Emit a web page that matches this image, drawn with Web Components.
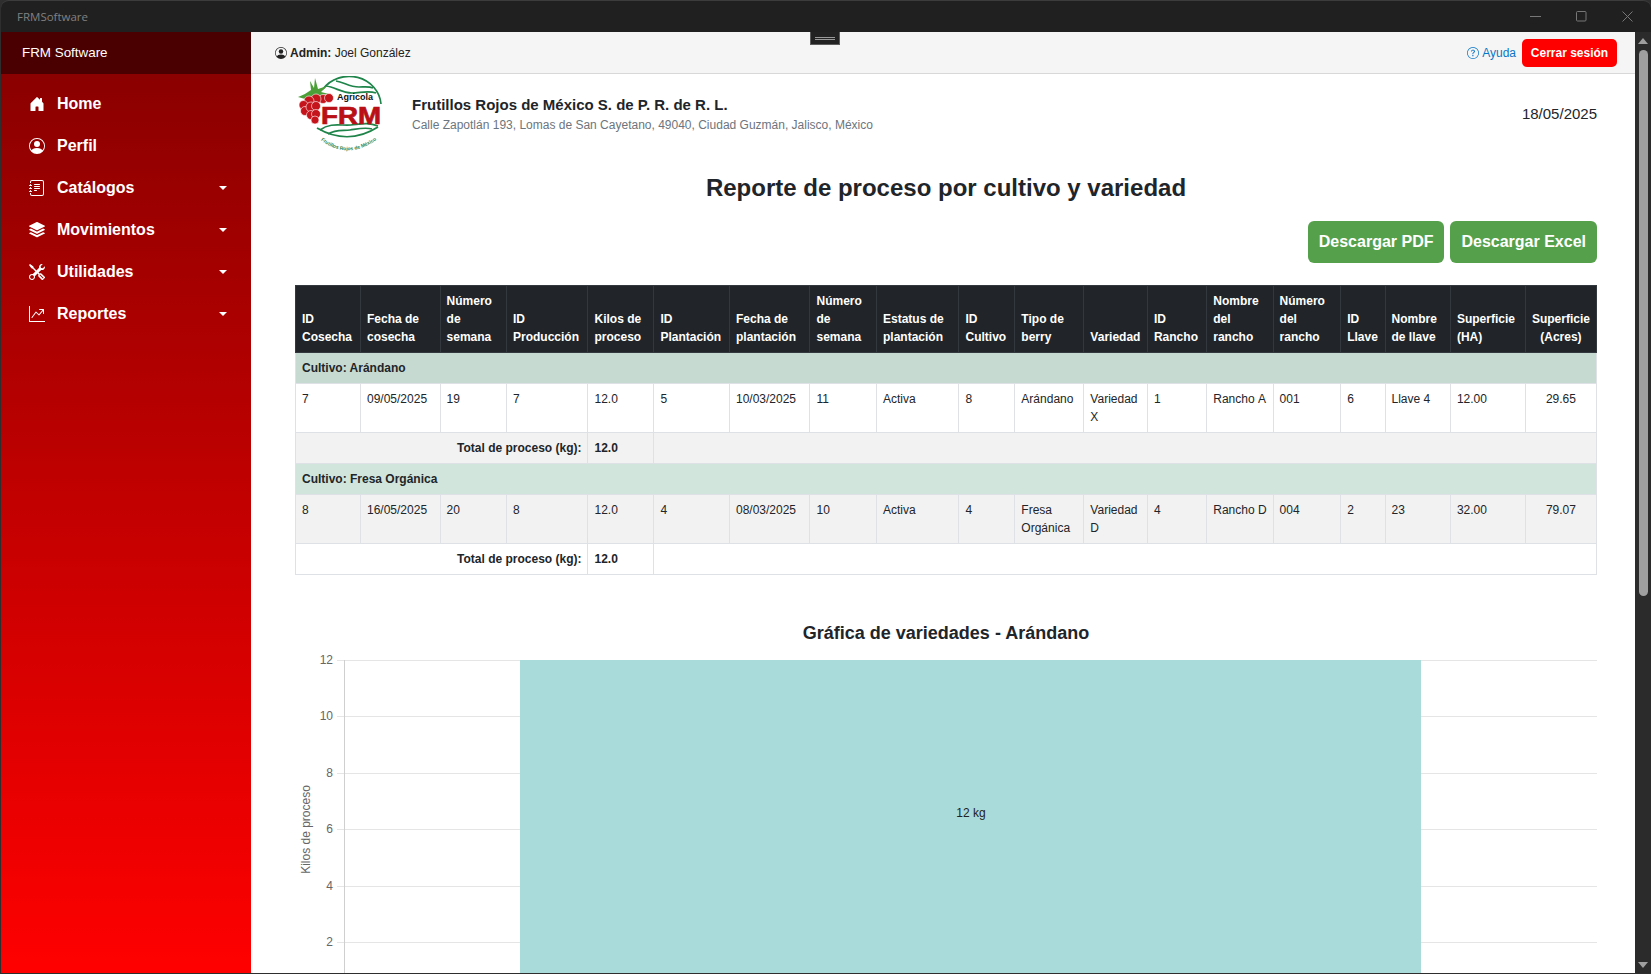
<!DOCTYPE html>
<html lang="es">
<head>
<meta charset="utf-8">
<title>FRMSoftware</title>
<style>
  html, body { margin: 0; height: 100%; overflow: hidden; background: #1c1c1c; }
  body { font-family: "Liberation Sans", Arial, sans-serif; }
</style>
</head>
<body>
<frm-window>
  <frm-sidebar slot="side"></frm-sidebar>
  <frm-topbar slot="top"></frm-topbar>
  <frm-company></frm-company>
  <frm-report-title></frm-report-title>
  <frm-report-table></frm-report-table>
  <frm-chart></frm-chart>
</frm-window>

<script>
class frmWindow extends HTMLElement {
  constructor() {
    super();
    this.attachShadow({ mode: 'open' });
  }
  connectedCallback() {
    this.shadowRoot.innerHTML = `
    <style>
    :host{
      display: flex;
      flex-direction: column;
      height: 974px;
      box-sizing: border-box;
      padding: 0 0 1px 1px;
      background: #2e2e2e;
      overflow: hidden;
      font-family: "Liberation Sans", Arial, sans-serif;
    }
    .title{
      flex: 0 0 32px;
      box-sizing: border-box;
      display: flex;
      align-items: center;
      background: #202020;
      border-top: 1px solid #3c3c3c;
      color: #808080;
      font: 11.5px "Open Sans", sans-serif;
      padding: 0 1px 0 16px;
      border-radius: 8px 8px 0 0;
    }
    .title span{ flex: 1; }
    .ctl{ width: 46px; height: 31px; display: flex; align-items: center; justify-content: center; }
    .ctl svg{ stroke: #777; fill: none; }
    .app{ flex: 1; display: flex; min-height: 0; }
    .main{ flex: 1; display: flex; flex-direction: column; min-width: 0; background: #fff; position: relative; }
    .grip{
      position: absolute; left: 559px; top: 0;
      width: 30px; height: 13px;
      box-sizing: border-box;
      background: #222;
      border: 1px solid #5c5c5c;
      border-top: 0;
      display: flex; flex-direction: column; justify-content: center; align-items: center; gap: 1px;
    }
    .grip i{ display: block; width: 20px; height: 1px; background: #999; }
    .body{ flex: 1; min-height: 0; overflow: hidden; padding: 2px 38px 0 44px; }
    .bar{ flex: 0 0 16px; background: #2b2b2b; display: flex; flex-direction: column; align-items: center; }
    .arrow{ width: 0; height: 0; border-left: 5px solid transparent; border-right: 5px solid transparent; }
    .up{ border-bottom: 6px solid #9f9f9f; margin-top: 6px; }
    .down{ border-top: 6px solid #9f9f9f; margin-top: auto; margin-bottom: 5px; }
    .thumb{ width: 9px; height: 546px; margin-top: 6px; background: #9f9f9f; border-radius: 5px; }
    </style>
    <div class="title">
      <span>FRMSoftware</span>
      <div class="ctl"><svg width="11" height="11"><path d="M0 5.500h11"/></svg></div>
      <div class="ctl"><svg width="11" height="11"><rect x=".5" y=".5" width="9.500" height="9.500" rx="1"/></svg></div>
      <div class="ctl"><svg width="11" height="11"><path d="M.5.5l10 10M10.500.5l-10 10"/></svg></div>
    </div>
    <div class="app">
      <slot name="side"></slot>
      <div class="main">
        <slot name="top"></slot>
        <div class="grip"><i></i><i></i></div>
        <div class="body"><slot></slot></div>
      </div>
      <div class="bar">
        <div class="arrow up"></div>
        <div class="thumb"></div>
        <div class="arrow down"></div>
      </div>
    </div>
    `;
  }
}

class frmSidebar extends HTMLElement {
  constructor() {
    super();
    this.attachShadow({ mode: 'open' });
  }
  getItems() {
    return [
      ['Home', false, '<path d="M6.5 14.500v-3.505c0-.245.25-.495.5-.495h2c.25 0 .5.25.5.5v3.500a.5.5 0 0 0 .5.5h4a.5.5 0 0 0 .5-.5v-7a.5.5 0 0 0-.146-.354L13 5.793V2.500a.5.5 0 0 0-.5-.5h-1a.5.5 0 0 0-.5.5v1.293L8.354 1.146a.5.5 0 0 0-.708 0l-6 6A.5.5 0 0 0 1.500 7.500v7a.5.5 0 0 0 .5.5h4a.5.5 0 0 0 .5-.5z"/>'],
      ['Perfil', false, '<path d="M11 6a3 3 0 1 1-6 0 3 3 0 0 1 6 0z"/><path fill-rule="evenodd" d="M0 8a8 8 0 1 1 16 0A8 8 0 0 1 0 8zm8-7a7 7 0 0 0-5.468 11.370C3.242 11.226 4.805 10 8 10s4.757 1.225 5.468 2.370A7 7 0 0 0 8 1z"/>'],
      ['Catálogos', true, '<path d="M5 10.500a.5.5 0 0 1 .5-.5h2a.5.5 0 0 1 0 1h-2a.5.5 0 0 1-.5-.5zm0-2a.5.5 0 0 1 .5-.5h5a.5.5 0 0 1 0 1h-5a.5.5 0 0 1-.5-.5zm0-2a.5.5 0 0 1 .5-.5h5a.5.5 0 0 1 0 1h-5a.5.5 0 0 1-.5-.5zm0-2a.5.5 0 0 1 .5-.5h5a.5.5 0 0 1 0 1h-5a.5.5 0 0 1-.5-.5z"/><path d="M3 0h10a2 2 0 0 1 2 2v12a2 2 0 0 1-2 2H3a2 2 0 0 1-2-2v-1h1v1a1 1 0 0 0 1 1h10a1 1 0 0 0 1-1V2a1 1 0 0 0-1-1H3a1 1 0 0 0-1 1v1H1V2a2 2 0 0 1 2-2z"/><path d="M1 5v-.5a.5.5 0 0 1 1 0V5h.5a.5.5 0 0 1 0 1h-2a.5.5 0 0 1 0-1H1zm0 3v-.5a.5.5 0 0 1 1 0V8h.5a.5.5 0 0 1 0 1h-2a.5.5 0 0 1 0-1H1zm0 3v-.5a.5.5 0 0 1 1 0v.5h.5a.5.5 0 0 1 0 1h-2a.5.5 0 0 1 0-1H1z"/>'],
      ['Movimientos', true, '<path d="m14.120 10.163 1.715.858c.22.11.22.424 0 .534L8.267 15.340a.598.598 0 0 1-.534 0L.165 11.555a.299.299 0 0 1 0-.534l1.716-.858 5.317 2.659c.505.252 1.100.252 1.604 0l5.317-2.660zM7.733.063a.598.598 0 0 1 .534 0l7.568 3.784a.3.3 0 0 1 0 .535L8.267 8.165a.598.598 0 0 1-.534 0L.165 4.382a.299.299 0 0 1 0-.535L7.733.063z"/><path d="m14.120 6.576 1.715.858c.22.11.22.424 0 .534l-7.568 3.784a.598.598 0 0 1-.534 0L.165 7.968a.299.299 0 0 1 0-.534l1.716-.858 5.317 2.659c.505.252 1.100.252 1.604 0l5.317-2.659z"/>'],
      ['Utilidades', true, '<path d="M1 0 0 1l2.200 3.081a1 1 0 0 0 .815.419h.07a1 1 0 0 1 .708.293l2.675 2.675-2.617 2.654A3.003 3.003 0 0 0 0 13a3 3 0 1 0 5.878-.851l2.654-2.617.968.968-.305.914a1 1 0 0 0 .242 1.023l3.270 3.270a.997.997 0 0 0 1.414 0l1.586-1.586a.997.997 0 0 0 0-1.414l-3.270-3.270a1 1 0 0 0-1.023-.242L10.500 9.500l-.96-.96 2.680-2.643A3.005 3.005 0 0 0 16 3c0-.269-.035-.53-.102-.777l-2.140 2.141L12 4l-.364-1.757L13.777.102a3 3 0 0 0-3.675 3.680L7.462 6.460 4.793 3.793a1 1 0 0 1-.293-.707v-.071a1 1 0 0 0-.419-.814L1 0Zm9.646 10.646a.5.5 0 0 1 .708 0l2.914 2.915a.5.5 0 0 1-.707.707l-2.915-2.914a.5.5 0 0 1 0-.708ZM3 11l.471.242.529.026.287.445.445.287.026.529L5 13l-.242.471-.026.529-.445.287-.287.445-.529.026L3 15l-.471-.242L2 14.732l-.287-.445L1.268 14l-.026-.529L1 13l.242-.471.026-.529.445-.287.287-.445.529-.026L3 11Z"/>'],
      ['Reportes', true, '<path fill-rule="evenodd" d="M0 0h1v15h15v1H0V0Zm10 3.500a.5.5 0 0 1 .5-.5h4a.5.5 0 0 1 .5.5v4a.5.5 0 0 1-1 0V4.900l-3.613 4.417a.5.5 0 0 1-.74.037L7.060 6.767l-3.656 5.027a.5.5 0 0 1-.808-.588l4-5.500a.5.5 0 0 1 .758-.06l2.609 2.610L13.445 4H10.500a.5.5 0 0 1-.5-.5Z"/>'],
    ];
  }
  getStyles() {
    return `
    <style>
    :host{
      display: flex;
      flex-direction: column;
      flex: 0 0 250px;
      width: 250px;
      color: #fff;
      font-family: "Liberation Sans", Arial, sans-serif;
    }
    .brand{
      flex: 0 0 42px;
      box-sizing: border-box;
      background: #4a0000;
      display: flex;
      align-items: center;
      padding: 0 0 1px 21px;
      font-size: 13.400px;
    }
    nav{
      flex: 1;
      display: flex;
      flex-direction: column;
      padding-top: 9px;
      background: linear-gradient(#8b0000, #ff0000);
    }
    a{
      height: 42px;
      display: flex;
      align-items: center;
      font-size: 16px;
      font-weight: bold;
      padding: 0 24px 0 28px;
    }
    a svg{ width: 16px; height: 16px; margin-right: 12px; flex: none; fill: #fff; }
    a span{ flex: 1; }
    .caret{ width: 0; height: 0; border-left: 4px solid transparent; border-right: 4px solid transparent; border-top: 4.500px solid #fff; }
    </style>
    `;
  }
  connectedCallback() {
    const links = this.getItems().map(([label, sub, icon]) => `
      <a><svg viewBox="0 0 16 16">${icon}</svg><span>${label}</span>${sub ? '<div class="caret"></div>' : ''}</a>
    `).join('');
    this.shadowRoot.innerHTML = `${this.getStyles()}
      <div class="brand">FRM Software</div>
      <nav>${links}</nav>`;
  }
}

class frmTopbar extends HTMLElement {
  constructor() {
    super();
    this.attachShadow({ mode: 'open' });
  }
  connectedCallback() {
    this.shadowRoot.innerHTML = `
    <style>
    :host{
      display: flex;
      align-items: center;
      flex: 0 0 42px;
      height: 42px;
      box-sizing: border-box;
      background: #f5f5f5;
      border-bottom: 1px solid #d8d8d8;
      padding: 0 18px 0 24px;
      font-size: 12px;
      color: #222;
      font-family: "Liberation Sans", Arial, sans-serif;
    }
    .user{ flex: 1; display: flex; align-items: center; gap: 3px; }
    .help{ display: flex; align-items: center; gap: 3px; color: #0b76c5; margin-right: 6px; }
    svg{ width: 12px; height: 12px; fill: currentColor; }
    button{
      border: 0; background: #ff0000; color: #fff;
      font: bold 12px "Liberation Sans", Arial, sans-serif;
      width: 95px; height: 28px; border-radius: 5px; padding: 0;
    }
    </style>
    <div class="user">
      <svg viewBox="0 0 16 16"><path d="M11 6a3 3 0 1 1-6 0 3 3 0 0 1 6 0z"/><path fill-rule="evenodd" d="M0 8a8 8 0 1 1 16 0A8 8 0 0 1 0 8zm8-7a7 7 0 0 0-5.468 11.370C3.242 11.226 4.805 10 8 10s4.757 1.225 5.468 2.370A7 7 0 0 0 8 1z"/></svg>
      <span><b>Admin:</b> Joel González</span>
    </div>
    <div class="help">
      <svg viewBox="0 0 16 16"><path d="M8 15A7 7 0 1 1 8 1a7 7 0 0 1 0 14zm0 1A8 8 0 1 0 8 0a8 8 0 0 0 0 16z"/><path d="M5.255 5.786a.237.237 0 0 0 .241.247h.825c.138 0 .248-.113.266-.25.09-.656.54-1.134 1.342-1.134.686 0 1.314.343 1.314 1.168 0 .635-.374.927-.965 1.371-.673.489-1.206 1.060-1.168 1.987l.003.217a.25.25 0 0 0 .25.246h.811a.25.25 0 0 0 .25-.25v-.105c0-.718.273-.927 1.010-1.486.609-.463 1.244-.977 1.244-2.056 0-1.511-1.276-2.241-2.673-2.241-1.267 0-2.655.59-2.750 2.286zm1.557 5.763c0 .533.425.927 1.010.927.609 0 1.028-.394 1.028-.927 0-.552-.42-.94-1.029-.94-.584 0-1.009.388-1.009.94z"/></svg>
      <span>Ayuda</span>
    </div>
    <button>Cerrar sesión</button>
    `;
  }
}

class frmCompany extends HTMLElement {
  constructor() {
    super();
    this.attachShadow({ mode: 'open' });
  }
  connectedCallback() {
    this.shadowRoot.innerHTML = `
    <style>
    :host{
      display: flex;
      align-items: flex-start;
      height: 83px;
      color: #212529;
      font-family: "Liberation Sans", Arial, sans-serif;
    }
    svg{ flex: none; width: 88px; height: 80px; margin-left: 1px; }
    .info{ flex: 1; margin-left: 28px; padding-top: 19px; }
    .name{ font-size: 15px; font-weight: bold; line-height: 20px; }
    .addr{ font-size: 12px; line-height: 18px; color: #6c757d; margin-top: 1px; }
    .date{ font-size: 15px; padding-top: 29px; }
    </style>
    <svg viewBox="0 0 88 80">
      <g fill="none" stroke="#1e8449" stroke-width="1.700">
        <path d="M27 13A32 30 0 0 1 85 28"/>
        <path d="M30 10c9 1 16 7 26 7 8 0 16-3 24 0M40 5c8 1 13 6 23 6 5 0 10-1 14 1"/>
        <path d="M21 52Q52 70 82 51"/>
        <path d="M24 54c11-8 21-4 31-5s17-3 27 1M32 58c8-5 15-3 22-4s15-3 22-1"/>
      </g>
      <path fill="#4c9f38" d="M2 21c5-2 9-4 13-7l-1-9 4 7 1-10 3 11 9-3-6 6 8 2-8 1-6 3c-6 2-11 1-17-1z"/>
      <g fill="#c5141b" stroke="#fff" stroke-width=".6">
        <circle cx="27" cy="23" r="4.500"/><circle cx="33" cy="22" r="4.500"/><circle cx="20" cy="23" r="5"/>
        <circle cx="13" cy="25" r="5"/><circle cx="7.500" cy="29" r="4.500"/><circle cx="9" cy="35" r="4.500"/>
        <circle cx="15" cy="31" r="5"/><circle cx="20" cy="30" r="4.500"/><circle cx="15" cy="39" r="4.500"/>
        <circle cx="20" cy="38" r="4.500"/><circle cx="19" cy="44" r="4"/>
      </g>
      <text x="41" y="24.200" font-family="Liberation Sans" font-size="9" font-weight="bold" fill="#111" textLength="36" lengthAdjust="spacingAndGlyphs">Agricola</text>
      <text x="25" y="47.500" font-family="Liberation Sans" font-size="24" font-weight="bold" fill="#b91016" stroke="#b91016" stroke-width=".7" textLength="60" lengthAdjust="spacingAndGlyphs">FRM</text>
      <path id="logoArc" fill="none" d="M23 63Q52 86 83 62"/>
      <text font-family="Liberation Sans" font-size="5" font-weight="bold" fill="#1e8449"><textPath href="#logoArc" startOffset="2">Frutillos Rojos de México</textPath></text>
    </svg>
    <div class="info">
      <div class="name">Frutillos Rojos de México S. de P. R. de R. L.</div>
      <div class="addr">Calle Zapotlán 193, Lomas de San Cayetano, 49040, Ciudad Guzmán, Jalisco, México</div>
    </div>
    <div class="date">18/05/2025</div>
    `;
  }
}

class frmReportTitle extends HTMLElement {
  constructor() {
    super();
    this.attachShadow({ mode: 'open' });
  }
  connectedCallback() {
    this.shadowRoot.innerHTML = `
    <style>
    :host{
      display: block;
      color: #212529;
      font-family: "Liberation Sans", Arial, sans-serif;
    }
    h1{ margin: 14px 0 0; font-size: 24px; line-height: 29px; text-align: center; }
    .actions{ display: flex; justify-content: flex-end; gap: 6px; margin-top: 19px; }
    button{
      height: 42px; border: 0; border-radius: 6px; padding: 0 11px;
      background: #55a14b; color: #fff;
      font: bold 16px "Liberation Sans", Arial, sans-serif;
    }
    </style>
    <h1>Reporte de proceso por cultivo y variedad</h1>
    <div class="actions"><button>Descargar PDF</button><button>Descargar Excel</button></div>
    `;
  }
}

class frmReportTable extends HTMLElement {
  constructor() {
    super();
    this.attachShadow({ mode: 'open' });
    this.widths = [65, 79.6, 66.4, 81.5, 65.9, 75.6, 80.5, 66.5, 82.5, 55.9, 69, 63.6, 59.3, 66.3, 67.6, 44.4, 65.4, 74.9, 71.2];
    this.heads = ['ID Cosecha', 'Fecha de cosecha', 'Número de semana', 'ID Producción', 'Kilos de proceso', 'ID Plantación', 'Fecha de plantación', 'Número de semana', 'Estatus de plantación', 'ID Cultivo', 'Tipo de berry', 'Variedad', 'ID Rancho', 'Nombre del rancho', 'Número del rancho', 'ID Llave', 'Nombre de llave', 'Superficie (HA)', 'Superficie (Acres)'];
    this.groups = [
      { name: 'Arándano', color: '#c6dad1', row: ['7', '09/05/2025', '19', '7', '12.0', '5', '10/03/2025', '11', 'Activa', '8', 'Arándano', 'Variedad X', '1', 'Rancho&nbsp;A', '001', '6', 'Llave 4', '12.00', '29.65'], bg: '#fff', totalBg: '#f2f2f2' },
      { name: 'Fresa Orgánica', color: '#d1e5dd', row: ['8', '16/05/2025', '20', '8', '12.0', '4', '08/03/2025', '10', 'Activa', '4', 'Fresa Orgánica', 'Variedad D', '4', 'Rancho&nbsp;D', '004', '2', '23', '32.00', '79.07'], bg: '#f2f2f2', totalBg: '#fff' },
    ];
  }
  getStyles() {
    return `
    <style>
    :host{
      display: block;
      margin-top: 22px;
      font-family: "Liberation Sans", Arial, sans-serif;
    }
    table{
      width: 1301.100px;
      table-layout: fixed;
      border-collapse: collapse;
      font-size: 12px;
      line-height: 18px;
      color: #212529;
    }
    th, td{ border: 1px solid #dee2e6; padding: 6px; vertical-align: top; text-align: left; }
    th{ background: #212529; color: #fff; border-color: #32383e; vertical-align: bottom; }
    th:last-child, .acres{ text-align: center; }
    .group td{ font-weight: bold; }
    .total td{ font-weight: bold; }
    .total .r{ text-align: right; }
    </style>
    `;
  }
  connectedCallback() {
    const cols = this.widths.map((w) => `<col style="width:${w}px">`).join('');
    const head = this.heads.map((h) => `<th>${h}</th>`).join('');
    const body = this.groups.map((g) => `
      <tr class="group" style="background:${g.color}"><td colspan="19">Cultivo: ${g.name}</td></tr>
      <tr style="background:${g.bg}">${g.row.map((c, i) => `<td${i === 18 ? ' class="acres"' : ''}>${c}</td>`).join('')}</tr>
      <tr class="total" style="background:${g.totalBg}"><td class="r" colspan="4">Total de proceso (kg):</td><td>12.0</td><td colspan="14"></td></tr>
    `).join('');
    this.shadowRoot.innerHTML = `${this.getStyles()}
      <table><colgroup>${cols}</colgroup><thead><tr>${head}</tr></thead><tbody>${body}</tbody></table>`;
  }
}

class frmChart extends HTMLElement {
  constructor() {
    super();
    this.attachShadow({ mode: 'open' });
  }
  getPlot() {
    // coordinates on the plot canvas, bar and grid share the same y scale
    const ticks = [[12, 10.5], [10, 66.5], [8, 123.5], [6, 179.5], [4, 236.5], [2, 292.5]];
    const lines = ticks.map(([v, y]) => `
      <path d="M42 ${y}H1302" stroke="#e5e5e5" stroke-width="1"/>
      <text x="38" y="${y + 3.5}" text-anchor="end" font-size="12" fill="#666">${v}</text>`).join('');
    return `
      <svg width="1302" height="330" viewBox="0 0 1302 330" font-family="Liberation Sans">
        ${lines}
        <path d="M49.500 10V330" stroke="#cfcfcf"/>
        <rect x="225" y="10" width="901" height="320" fill="#a9dbdb"/>
        <text x="676" y="167" text-anchor="middle" font-size="12" fill="#222">12 kg</text>
        <text transform="translate(14.500 179.500) rotate(-90)" text-anchor="middle" font-size="12" fill="#666">Kilos de proceso</text>
      </svg>`;
  }
  connectedCallback() {
    this.shadowRoot.innerHTML = `
    <style>
    :host{
      display: block;
      margin-top: 47px;
      font-family: "Liberation Sans", Arial, sans-serif;
    }
    h2{ margin: 0; font-size: 18px; line-height: 22px; text-align: center; color: #212529; }
    svg{ display: block; margin-top: 6px; }
    </style>
    <h2>Gráfica de variedades - Arándano</h2>
    ${this.getPlot()}
    `;
  }
}

customElements.define('frm-window', frmWindow);
customElements.define('frm-sidebar', frmSidebar);
customElements.define('frm-topbar', frmTopbar);
customElements.define('frm-company', frmCompany);
customElements.define('frm-report-title', frmReportTitle);
customElements.define('frm-report-table', frmReportTable);
customElements.define('frm-chart', frmChart);
</script>
</body>
</html>
